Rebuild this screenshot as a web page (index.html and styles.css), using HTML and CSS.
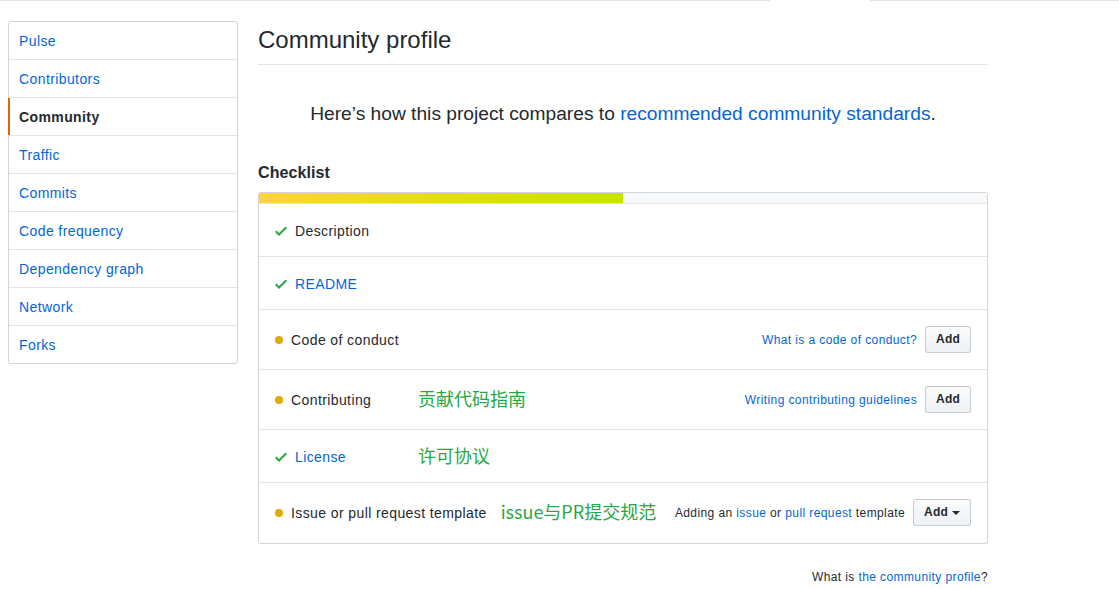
FILE: index.html
```html
<!DOCTYPE html>
<html lang="en">
<head>
<meta charset="utf-8">
<title>Community profile</title>
<link rel="stylesheet" href="styles.css">
</head>
<body>
<div class="topline"><span class="seg seg-a"></span><span class="seg-gap"></span><span class="seg seg-b"></span></div>
<div class="page">
  <nav class="menu">
    <a class="menu-item" href="#">Pulse</a>
    <a class="menu-item" href="#">Contributors</a>
    <a class="menu-item selected" href="#">Community</a>
    <a class="menu-item" href="#">Traffic</a>
    <a class="menu-item" href="#">Commits</a>
    <a class="menu-item" href="#">Code frequency</a>
    <a class="menu-item" href="#">Dependency graph</a>
    <a class="menu-item" href="#">Network</a>
    <a class="menu-item last" href="#">Forks</a>
  </nav>
  <main class="main">
    <h2 class="subhead">Community profile</h2>
    <p class="lead">Here’s how this project compares to <a href="#">recommended community standards</a>.</p>
    <h3 class="checklist-title">Checklist</h3>
    <div class="box">
      <div class="progress"><span class="progress-fill" style="width: 50%"></span></div>
      <div class="row plain">
        <div class="label-col"><svg class="check" viewBox="0 0 12 16" width="12" height="16"><path d="M12 5l-8 8-4-4 1.5-1.5L4 10l6.5-6.5L12 5z"/></svg><span>Description</span></div>
      </div>
      <div class="row plain">
        <div class="label-col"><svg class="check" viewBox="0 0 12 16" width="12" height="16"><path d="M12 5l-8 8-4-4 1.5-1.5L4 10l6.5-6.5L12 5z"/></svg><a href="#">README</a></div>
      </div>
      <div class="row">
        <div class="label-col"><span class="dot"></span><span>Code of conduct</span></div>
        <div class="actions"><a class="small-link" href="#">What is a code of conduct?</a><button class="btn">Add</button></div>
      </div>
      <div class="row">
        <div class="label-col"><span class="dot"></span><span>Contributing</span></div>
        <span class="note">贡献代码指南</span>
        <div class="actions"><a class="small-link" href="#">Writing contributing guidelines</a><button class="btn">Add</button></div>
      </div>
      <div class="row plain">
        <div class="label-col"><svg class="check" viewBox="0 0 12 16" width="12" height="16"><path d="M12 5l-8 8-4-4 1.5-1.5L4 10l6.5-6.5L12 5z"/></svg><a href="#">License</a></div>
        <span class="note">许可协议</span>
      </div>
      <div class="row last">
        <div class="label-col"><span class="dot"></span><span>Issue or pull request template</span></div>
        <span class="note">issue与PR提交规范</span>
        <div class="actions"><span class="small-text">Adding an <a href="#">issue</a> or <a href="#">pull request</a> template</span><button class="btn">Add<span class="caret"></span></button></div>
      </div>
    </div>
    <p class="footer-note">What is <a href="#">the community profile</a>?</p>
  </main>
</div>
</body>
</html>
```
FILE: styles.css
```css
* { box-sizing: border-box; }
body {
  margin: 0;
  font-family: "Liberation Sans", Arial, sans-serif;
  font-size: 14px;
  line-height: 1.5;
  letter-spacing: 0.4px;
  color: #24292e;
  background: #fff;
}
a { color: #0366d6; text-decoration: none; }

.topline { display: flex; height: 1px; }
.seg { height: 1px; background: #e1e4e8; }
.seg-a { width: 770px; }
.seg-gap { width: 100px; }
.seg-b { flex: 1; }

.page {
  display: flex;
  gap: 20px;
  padding: 20px 0 0 8px;
  align-items: flex-start;
}

.menu {
  width: 230px;
  flex: none;
  border: 1px solid #d1d5da;
  border-radius: 3px;
  display: flex;
  flex-direction: column;
}
.menu-item {
  display: block;
  padding: 9px 10px 7px;
  line-height: 21px;
  border-bottom: 1px solid #e1e4e8;
  color: #0366d6;
  position: relative;
}
.menu-item.last { border-bottom: 0; }
.menu-item.selected {
  color: #24292e;
  font-weight: bold;
}
.menu-item.selected::before {
  content: "";
  position: absolute;
  left: -1px;
  top: 0;
  bottom: 0;
  width: 2px;
  background: #e36209;
}

.main { width: 730px; flex: none; }

.subhead {
  margin: 0;
  padding-top: 4px;
  padding-bottom: 9px;
  font-size: 24px;
  line-height: 30px;
  font-weight: normal;
  letter-spacing: normal;
  border-bottom: 1px solid #e1e4e8;
}

.lead {
  margin: 34px 0 0;
  text-align: center;
  font-size: 19.2px;
  line-height: 30px;
  letter-spacing: normal;
}

.checklist-title {
  margin: 32px 0 7px;
  font-size: 16px;
  line-height: 24px;
  font-weight: bold;
  letter-spacing: 0.1px;
}

.box {
  border: 1px solid #d1d5da;
  border-radius: 3px;
}
.progress {
  height: 11px;
  background: #f6f8fa;
  border-bottom: 1px solid #e1e4e8;
  display: flex;
}
.progress-fill {
  display: block;
  height: 10px;
  background: linear-gradient(to right, #ffd33d, #c6e400);
}

.row {
  display: flex;
  align-items: center;
  gap: 14px;
  padding: 16px;
  border-bottom: 1px solid #e1e4e8;
  line-height: 20px;
  min-height: 53px;
}
.row.plain { padding: 17px 16px 15px; }
.row.last { border-bottom: 0; padding-bottom: 17px; }

.label-col {
  display: flex;
  align-items: center;
  min-width: 129px;
}
.check {
  fill: #28a745;
  margin-right: 8px;
  flex: none;
}
.dot {
  width: 8px;
  height: 8px;
  border-radius: 50%;
  background: #dbab09;
  margin: 0 8px 0 0;
  flex: none;
}

.note {
  font-family: "Noto Sans CJK SC", sans-serif;
  font-size: 18px;
  line-height: 20px;
  letter-spacing: normal;
  color: #28a745;
  margin-top: -4px;
}

.actions {
  margin-left: auto;
  display: flex;
  align-items: center;
  gap: 8px;
}
.small-link, .small-text { font-size: 12px; letter-spacing: 0.4px; }

.btn {
  font-family: "Liberation Sans", Arial, sans-serif;
  font-size: 12px;
  font-weight: bold;
  line-height: 19px;
  letter-spacing: 0.2px;
  padding: 3px 10px;
  color: #24292e;
  background: linear-gradient(-180deg, #fafbfc 0%, #eff3f6 90%);
  border: 1px solid rgba(27,31,35,0.2);
  border-radius: 3px;
  display: inline-flex;
  align-items: center;
}
.caret {
  display: inline-block;
  width: 0;
  height: 0;
  margin-left: 4px;
  border-top: 4px solid #24292e;
  border-left: 4px solid transparent;
  border-right: 4px solid transparent;
}

.footer-note {
  margin: 24px 0 0;
  text-align: right;
  font-size: 12px;
  line-height: 18px;
}
```
